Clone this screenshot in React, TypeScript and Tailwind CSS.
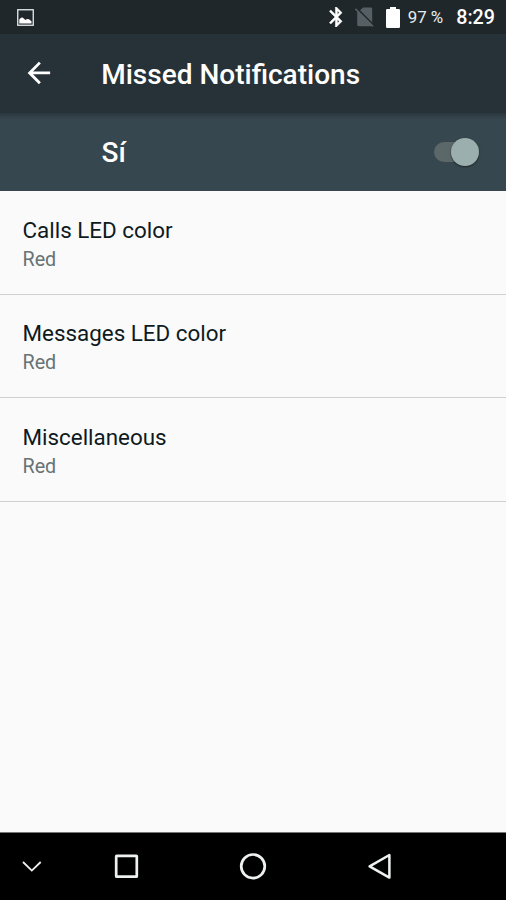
import { FC } from "react";

type SettingProps = {
  title: string;
  summary: string;
};

const settings: SettingProps[] = [
  { title: "Calls LED color", summary: "Red" },
  { title: "Messages LED color", summary: "Red" },
  { title: "Miscellaneous", summary: "Red" },
];

const StatusBar: FC = () => (
  <div className="flex h-[34px] shrink-0 items-center justify-between bg-[#20272b] pr-[11px] pl-[16.5px] text-white">
    <svg className="h-[17px] w-[17px]" viewBox="0 0 17 17">
      <rect x="0.75" y="0.75" width="15.5" height="15.5" fill="none" stroke="#e8ecec" strokeWidth="1.3" />
      <path d="M2.3 14.5V10.5L4 8.8 5.5 8.6 8.5 11 10 9.9 12 10.3 14.5 12.2V14.5Z" fill="#fff" />
    </svg>

    <div className="flex items-center">
      {/* Bluetooth */}
      <svg className="mr-[12px] h-[20px] w-[14px]" viewBox="4.6 2 14 20">
        <path
          d="M17.71 7.71 12 2h-1v7.59L6.41 5 5 6.41 10.59 12 5 17.59 6.41 19 11 14.41V22h1l5.71-5.71-4.3-4.29 4.3-4.29zM13 5.83l1.88 1.88L13 9.59V5.83zm1.88 10.46L13 18.17v-3.76l1.88 1.88z"
          fill="#fff"
          stroke="#fff"
          strokeWidth="0.5"
        />
      </svg>

      {/* No SIM */}
      <svg className="mr-[12px] h-[20px] w-[19px]" viewBox="0 0 19 20">
        <path d="M8.2 0.6H15.8Q17.2 0.6 17.2 2V17.8Q17.2 19.2 15.8 19.2H3.6Q2.2 19.2 2.2 17.8V5.6Z" fill="#566064" />
        <path d="M1.2 0.6 18.8 18.2" stroke="#20272b" strokeWidth="1.7" />
        <path d="M0.4 1.8 18 19.4" stroke="#566064" strokeWidth="1.5" />
      </svg>

      {/* Battery */}
      <svg className="mr-[8px] h-[21px] w-[14px]" viewBox="0 0 14 21">
        <path d="M4 0H10V2H12.8Q14 2 14 3.2V19.8Q14 21 12.8 21H1.2Q0 21 0 19.8V3.2Q0 2 1.2 2H4Z" fill="#fff" />
      </svg>

      <span className="mr-[13px] text-[16.9px] leading-[20px] whitespace-pre text-[#e9eded]">97 %</span>
      <span className="pt-[2px] text-[19.7px] leading-[20px] font-medium">8:29</span>
    </div>
  </div>
);

const Header: FC = () => (
  <header className="flex h-[79px] shrink-0 items-center bg-[#273238] pl-[22px] text-white">
    <button aria-label="Back" className="pb-[1px]">
      <svg className="h-[33.75px] w-[33.75px]" viewBox="0 0 24 24" fill="currentColor">
        <path d="M20 11H7.83l5.59-5.59L12 4l-8 8 8 8 1.41-1.41L7.83 13H20v-2z" />
      </svg>
    </button>
    <h1 className="ml-[45.5px] pt-[2px] text-[28px] leading-[34px] font-medium">Missed Notifications</h1>
  </header>
);

const SwitchBar: FC = () => (
  <div className="flex h-[78px] shrink-0 items-center justify-between bg-[#37474f] bg-linear-to-b from-[#2b373d] to-[#37474f] to-[6px] pr-[27.5px] pl-[101.5px] text-white">
    <span className="pt-[2px] text-[28px] leading-[34px] font-medium">Sí</span>
    <button
      role="switch"
      aria-checked="true"
      aria-label="Missed Notifications"
      className="flex h-[20px] w-[45px] items-center justify-end rounded-full bg-[#5b6768]"
    >
      <span className="h-[28px] w-[28px] shrink-0 rounded-full bg-[#9bb0ae] shadow-[0_1px_2px_rgba(0,0,0,0.5)]" />
    </button>
  </div>
);

const Setting: FC<SettingProps> = (props) => (
  <li className="h-[103.6px] border-b border-[#cfd0d0] px-[22.5px] pt-[24.6px]">
    <p className="text-[22.4px] leading-[28px] text-[#0f1a1e]">{props.title}</p>
    <p className="mt-[3px] text-[19.7px] leading-[26px] text-[#677374]">{props.summary}</p>
  </li>
);

const NavigationBar: FC = () => (
  <nav className="h-[68px] shrink-0 border-t border-[#777] bg-black">
    <svg className="h-[67px] w-[506px]" viewBox="0 833 506 67" fill="none" stroke="#eef1f1">
      <path d="M23 862 31.8 870.6 40.7 862" strokeWidth="1.8" />
      <rect x="116.2" y="855.9" width="20.6" height="20.8" rx="0.5" strokeWidth="2.7" />
      <circle cx="253" cy="866.3" r="11.8" strokeWidth="2.7" />
      <path d="M389.4 855V877.6L369.6 866.3Z" strokeWidth="2.5" strokeLinejoin="round" />
    </svg>
  </nav>
);

const App: FC = () => (
  <div className="flex h-[900px] w-[506px] flex-col overflow-hidden bg-[#fafafa] font-['Roboto',sans-serif]">
    <StatusBar />
    <Header />
    <SwitchBar />
    <ul className="min-h-0 flex-1">
      {settings.map((setting) => (
        <Setting key={setting.title} {...setting} />
      ))}
    </ul>
    <NavigationBar />
  </div>
);

export default App;
